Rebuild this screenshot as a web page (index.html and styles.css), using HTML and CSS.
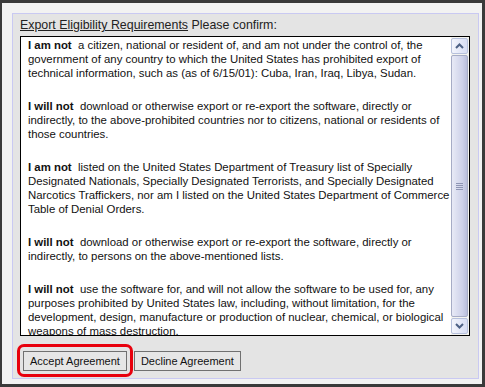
FILE: index.html
```html
<!DOCTYPE html>
<html lang="en">

<head>
    <meta charset="UTF-8">
    <title>Export Eligibility</title>
    <link rel="stylesheet" href="styles.css">
</head>

<body>
    <div class="frame">
        <div class="panel">
            <p class="heading"><u>Export Eligibility Requirements</u> Please confirm:</p>
            <div class="terms">
                <div class="terms-text">
                    <p><b>I am not</b>&nbsp; a citizen, national or resident of, and am not under the control of, the<br>
                        government of any country to which the United States has prohibited export of<br>
                        technical information, such as (as of 6/15/01): Cuba, Iran, Iraq, Libya, Sudan.</p>
                    <p><b>I will not</b>&nbsp; download or otherwise export or re-export the software, directly or<br>
                        indirectly, to the above-prohibited countries nor to citizens, national or residents of<br>
                        those countries.</p>
                    <p><b>I am not</b>&nbsp; listed on the United States Department of Treasury list of Specially<br>
                        Designated Nationals, Specially Designated Terrorists, and Specially Designated<br>
                        Narcotics Traffickers, nor am I listed on the United States Department of Commerce<br>
                        Table of Denial Orders.</p>
                    <p><b>I will not</b>&nbsp; download or otherwise export or re-export the software, directly or<br>
                        indirectly, to persons on the above-mentioned lists.</p>
                    <p><b>I will not</b>&nbsp; use the software for, and will not allow the software to be used for, any<br>
                        purposes prohibited by United States law, including, without limitation, for the<br>
                        development, design, manufacture or production of nuclear, chemical, or biological<br>
                        weapons of mass destruction.</p>
                </div>
                <div class="scrollbar">
                    <div class="scroll-btn">
                        <svg width="9" height="6" viewBox="0 0 9 6"><path d="M1 5 L4.5 1.5 L8 5" fill="none" stroke="#4d6185" stroke-width="2"/></svg>
                    </div>
                    <div class="scroll-thumb">
                        <span class="grip"></span>
                    </div>
                    <div class="scroll-btn">
                        <svg width="9" height="6" viewBox="0 0 9 6"><path d="M1 1 L4.5 4.5 L8 1" fill="none" stroke="#4d6185" stroke-width="2"/></svg>
                    </div>
                </div>
            </div>
            <div class="actions">
                <span class="highlight"><button class="btn">Accept Agreement</button></span>
                <button class="btn">Decline Agreement</button>
            </div>
        </div>
    </div>
</body>

</html>
```

FILE: styles.css
```css
html,
body {
    margin: 0;
    padding: 0;
}

body {
    font-family: "Liberation Sans", Arial, sans-serif;
    font-size: 11.4px;
    color: #000;
}

.frame {
    box-sizing: border-box;
    width: 485px;
    height: 387px;
    border: 3px solid #3a3a3a;
    border-left-width: 2px;
    background-color: #f2f2f2;
    padding: 10px 3px 5px 10px;
}

.panel {
    box-sizing: border-box;
    height: 366px;
    border: 1px solid #c9c9f2;
    background-color: #e4e4e4;
    padding: 4px 6px 0 7px;
}

.heading {
    margin: 0 0 4px;
    font-size: 12.4px;
    line-height: 14px;
    color: #222;
}

.terms {
    display: flex;
    width: 450px;
    height: 300px;
    box-sizing: border-box;
    border: 1px solid #000;
    background-color: #fff;
}

.terms-text {
    flex: 1;
    overflow: hidden;
    white-space: nowrap;
    padding: 1px 0 0 7px;
    line-height: 14px;
    color: #111;
}

.terms-text p {
    margin: 0 0 19px;
}

.scrollbar {
    width: 17px;
    display: flex;
    flex-direction: column;
    background-color: #f4f4f0;
    padding: 1px 1px 1px 0;
}

.scroll-btn {
    height: 16px;
    display: flex;
    align-items: center;
    justify-content: center;
    box-sizing: border-box;
    border: 1px solid #b6c0dc;
    border-radius: 2px;
    background: linear-gradient(to right, #f4f6fd, #d6dcf3);
}

.scroll-thumb {
    flex: 1;
    margin: 1px 0;
    box-sizing: border-box;
    border: 1px solid #a6acc6;
    border-radius: 2px;
    background: linear-gradient(to right, #e8eaf6, #cdd1e9 70%, #b9bedc);
    display: flex;
    align-items: center;
    justify-content: center;
}

.grip {
    width: 7px;
    height: 7px;
    background: repeating-linear-gradient(to bottom, #8e95b4 0, #8e95b4 1px, transparent 1px, transparent 2px);
}

.actions {
    display: flex;
    align-items: center;
    gap: 1px;
    margin-top: 8px;
    margin-left: -3px;
}

.highlight {
    display: inline-block;
    border: 3px solid #e8000d;
    border-radius: 7px;
    padding: 4px 3px 3px 3px;
}

.btn {
    font-family: "Liberation Sans", Arial, sans-serif;
    font-size: 11px;
    height: 20px;
    padding: 0 6px;
    border: 1px solid #707070;
    border-radius: 0;
    background-color: #e6e6e6;
    color: #111;
}
```
